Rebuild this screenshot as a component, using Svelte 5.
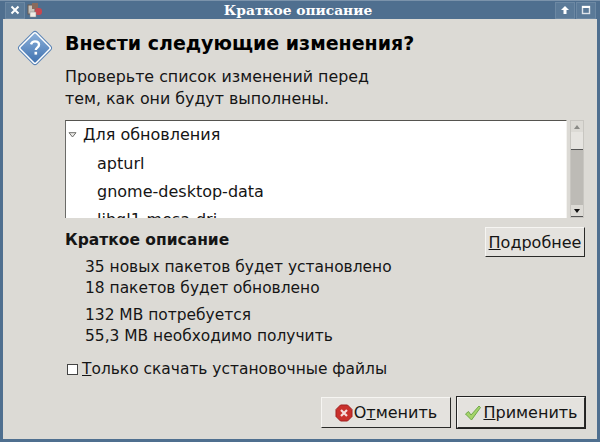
<script>
	const packages = ['apturl', 'gnome-desktop-data', 'libgl1-mesa-dri'];
	const summary = [
		['35 новых пакетов будет установлено', '18 пакетов будет обновлено'],
		['132 MB потребуется', '55,3 MB необходимо получить']
	];
</script>

<div class="window">
	<header class="titlebar">
		<div class="tb-btn close">
			<svg width="10" height="10" viewBox="0 0 10 10"><path d="M1.500 1.500l7 7M8.500 1.500l-7 7" stroke="#fff" stroke-width="2" /></svg>
		</div>
		<svg class="app-icon" width="16" height="16" viewBox="0 0 16 16">
			<rect x="1" y="3" width="7" height="9" fill="#c9c4bc" stroke="#6b5a50" />
			<rect x="5" y="1" width="6" height="6" fill="#8a6a5c" />
			<rect x="8" y="6" width="7" height="7" rx="3" fill="#c8474f" />
			<rect x="3" y="10" width="6" height="5" fill="#efece6" stroke="#888" stroke-width="0.5" />
		</svg>
		<div class="title">Краткое описание</div>
		<div class="tb-btn">
			<svg width="10" height="10" viewBox="0 0 10 10"><path d="M5 1l4 4H6.500v4h-3V5H1z" fill="#fff" /></svg>
		</div>
		<div class="tb-btn">
			<svg width="10" height="10" viewBox="0 0 10 10"><rect x="1.500" y="1.500" width="7" height="7" fill="none" stroke="#dfe4ea" stroke-width="1.400" /><path d="M1 2h8" stroke="#fff" stroke-width="2" /></svg>
		</div>
	</header>

	<main class="body">
		<div class="top">
			<svg class="question" width="36" height="36" viewBox="0 0 36 36">
				<defs>
					<linearGradient id="q" x1="0" y1="0" x2="1" y2="1">
						<stop offset="0" stop-color="#8fb3dc" />
						<stop offset="1" stop-color="#3d6fae" />
					</linearGradient>
				</defs>
				<rect x="6.500" y="6.500" width="23" height="23" rx="2" transform="rotate(45 18 18)" fill="url(#q)" stroke="#fff" stroke-width="2" />
				<rect x="5.500" y="5.500" width="25" height="25" rx="3" transform="rotate(45 18 18)" fill="none" stroke="#5b84b5" />
				<path d="M14 14.400c.6-2.100 2.100-3 4-3 2.400 0 4 1.400 4 3.300 0 2.900-3.200 2.800-3.200 5.300" fill="none" stroke="#fff" stroke-width="2.400" />
				<rect x="17.500" y="21.800" width="2.600" height="2.800" fill="#fff" />
			</svg>
			<div class="intro">
				<h1>Внести следующие изменения?</h1>
				<p>Проверьте список изменений перед<br />тем, как они будут выполнены.</p>
			</div>
		</div>

		<div class="list-wrap">
			<div class="list">
				<div class="row group">
					<svg class="arrow" width="9" height="6" viewBox="0 0 9 6"><path d="M1 .7h7L4.500 5z" fill="#ecebe8" stroke="#6e6e6a" /></svg>
					Для обновления
				</div>
				{#each packages as name}
					<div class="row item">{name}</div>
				{/each}
			</div>
			<div class="scrollbar">
				<div class="step up"><span></span></div>
				<div class="thumb"></div>
				<div class="track"></div>
				<div class="step down"><span></span></div>
			</div>
		</div>

		<div class="summary">
			<div class="summary-text">
				<h2>Краткое описание</h2>
				{#each summary as block}
					<div class="block">
						{#each block as line}
							<div>{line}</div>
						{/each}
					</div>
				{/each}
			</div>
			<button class="btn details"><u>П</u>одробнее</button>
		</div>

		<label class="check">
			<span class="box"></span>
			<span><u>Т</u>олько скачать установочные файлы</span>
		</label>

		<div class="actions">
			<button class="btn action">
				<svg width="18" height="18" viewBox="0 0 18 18">
					<path d="M5.500 1h7L17 5.500v7L12.500 17h-7L1 12.500v-7z" fill="#c9302c" stroke="#a02020" />
					<path d="M6 6l6 6M12 6l-6 6" stroke="#f6dcdc" stroke-width="2.200" />
				</svg>
				<span>О<u>т</u>менить</span>
			</button>
			<button class="btn action default">
				<svg width="18" height="18" viewBox="0 0 18 18">
					<path d="M1.500 10l3-2.500 2.500 3.500L15 2l1.500 1.500L7.500 16z" fill="#a5d46a" stroke="#6fa84a" />
				</svg>
				<span><u>П</u>рименить</span>
			</button>
		</div>
	</main>
</div>

<style>
	:global(body) {
		margin: 0;
		background: #4f6f8f;
	}

	.window {
		width: 600px;
		height: 442px;
		display: flex;
		flex-direction: column;
		box-sizing: border-box;
		font-family: 'DejaVu Sans', sans-serif;
		font-size: 16px;
		color: #151515;
		background: #4f6f8f;
		border-top: 1px solid #7b93ab;
		overflow: hidden;
	}

	.titlebar {
		height: 18px;
		display: flex;
		align-items: center;
		gap: 1px;
		padding: 0 4px 0 5px;
		flex-shrink: 0;
	}

	.tb-btn {
		width: 18px;
		height: 15px;
		display: flex;
		align-items: center;
		justify-content: center;
		background: #5b7a98;
		border: 1px solid #6c88a3;
	}

	.close {
		margin-right: 1px;
	}

	.app-icon {
		flex-shrink: 0;
	}

	.title {
		flex: 1;
		text-align: center;
		font-family: 'DejaVu Serif', serif;
		font-weight: bold;
		font-size: 13.800px;
		color: #fff;
		padding-right: 2px;
	}

	.body {
		flex: 1;
		margin: 0 3px 3px;
		padding: 11px 12px 11px 14px;
		background: #dcdad5;
		display: flex;
		flex-direction: column;
		min-height: 0;
		box-sizing: border-box;
	}

	.top {
		display: flex;
		gap: 12px;
	}

	.question {
		flex-shrink: 0;
	}

	h1 {
		margin: 0;
		font-size: 19px;
		line-height: 26px;
		font-weight: bold;
		color: #000;
	}

	.intro p {
		margin: 10px 0 0;
		line-height: 22px;
		font-size: 15.850px;
	}

	.list-wrap {
		margin: 10px 0 0 48px;
		display: flex;
		height: 98px;
		width: 519px;
		gap: 3px;
		flex-shrink: 0;
	}

	.list {
		flex: 1;
		background: #fff;
		border: 1px solid #6b6b68;
		border-top-color: #55544f;
		border-bottom: none;
		border-right: 1px solid #f4f3f0;
		overflow: hidden;
	}

	.row {
		height: 28px;
		line-height: 28px;
		white-space: nowrap;
	}

	.group {
		display: flex;
		align-items: center;
		margin-bottom: 1px;
	}

	.arrow {
		margin: 0 6px 0 2px;
		flex-shrink: 0;
	}

	.item {
		padding-left: 31px;
	}

	.scrollbar {
		width: 12px;
		display: flex;
		flex-direction: column;
		background: #bdbbb6;
		border: 1px solid #c8c6c1;
	}

	.step {
		height: 11px;
		background: #dcdad5;
		display: flex;
		align-items: center;
		justify-content: center;
		flex-shrink: 0;
	}

	.step span {
		width: 0;
		height: 0;
		border-left: 3px solid transparent;
		border-right: 3px solid transparent;
	}

	.up span {
		border-bottom: 4px solid #8a8a86;
	}

	.down span {
		border-top: 4px solid #111;
	}

	.down {
		border-bottom: 1px solid #555;
	}

	.thumb {
		height: 17px;
		background: #e6e4e0;
		border-bottom: 1px solid #555;
		flex-shrink: 0;
	}

	.track {
		flex: 1;
	}

	.summary {
		display: flex;
		justify-content: space-between;
		align-items: flex-start;
		margin: 9px 0 0 48px;
		width: 520px;
	}

	h2 {
		margin: 0;
		font-size: 15.500px;
		line-height: 22px;
		font-weight: bold;
	}

	.summary-text {
		padding-top: 2px;
	}

	.block {
		margin: 6px 0 0 20px;
		line-height: 21px;
		font-size: 15.450px;
	}

	.block + .block {
		margin-top: 6px;
	}

	.btn {
		font: inherit;
		color: #151515;
		background: #e4e2de;
		border: 1px solid;
		border-color: #f6f5f2 #2a2a28 #2a2a28 #f6f5f2;
		padding: 0;
		box-sizing: border-box;
	}

	.details {
		width: 100px;
		height: 30px;
	}

	.check {
		margin: 11px 0 0 50px;
		display: flex;
		align-items: center;
		gap: 4px;
		line-height: 22px;
		font-size: 15.450px;
	}

	.box {
		width: 9px;
		height: 9px;
		background: #fff;
		border: 1px solid #444;
	}

	.actions {
		margin-top: auto;
		display: flex;
		justify-content: flex-end;
		gap: 6px;
	}

	.action {
		height: 31px;
		width: 130px;
		display: flex;
		align-items: center;
		justify-content: center;
		gap: 1px;
	}

	.default {
		width: 128px;
		outline: 1px solid #222;
	}
</style>
